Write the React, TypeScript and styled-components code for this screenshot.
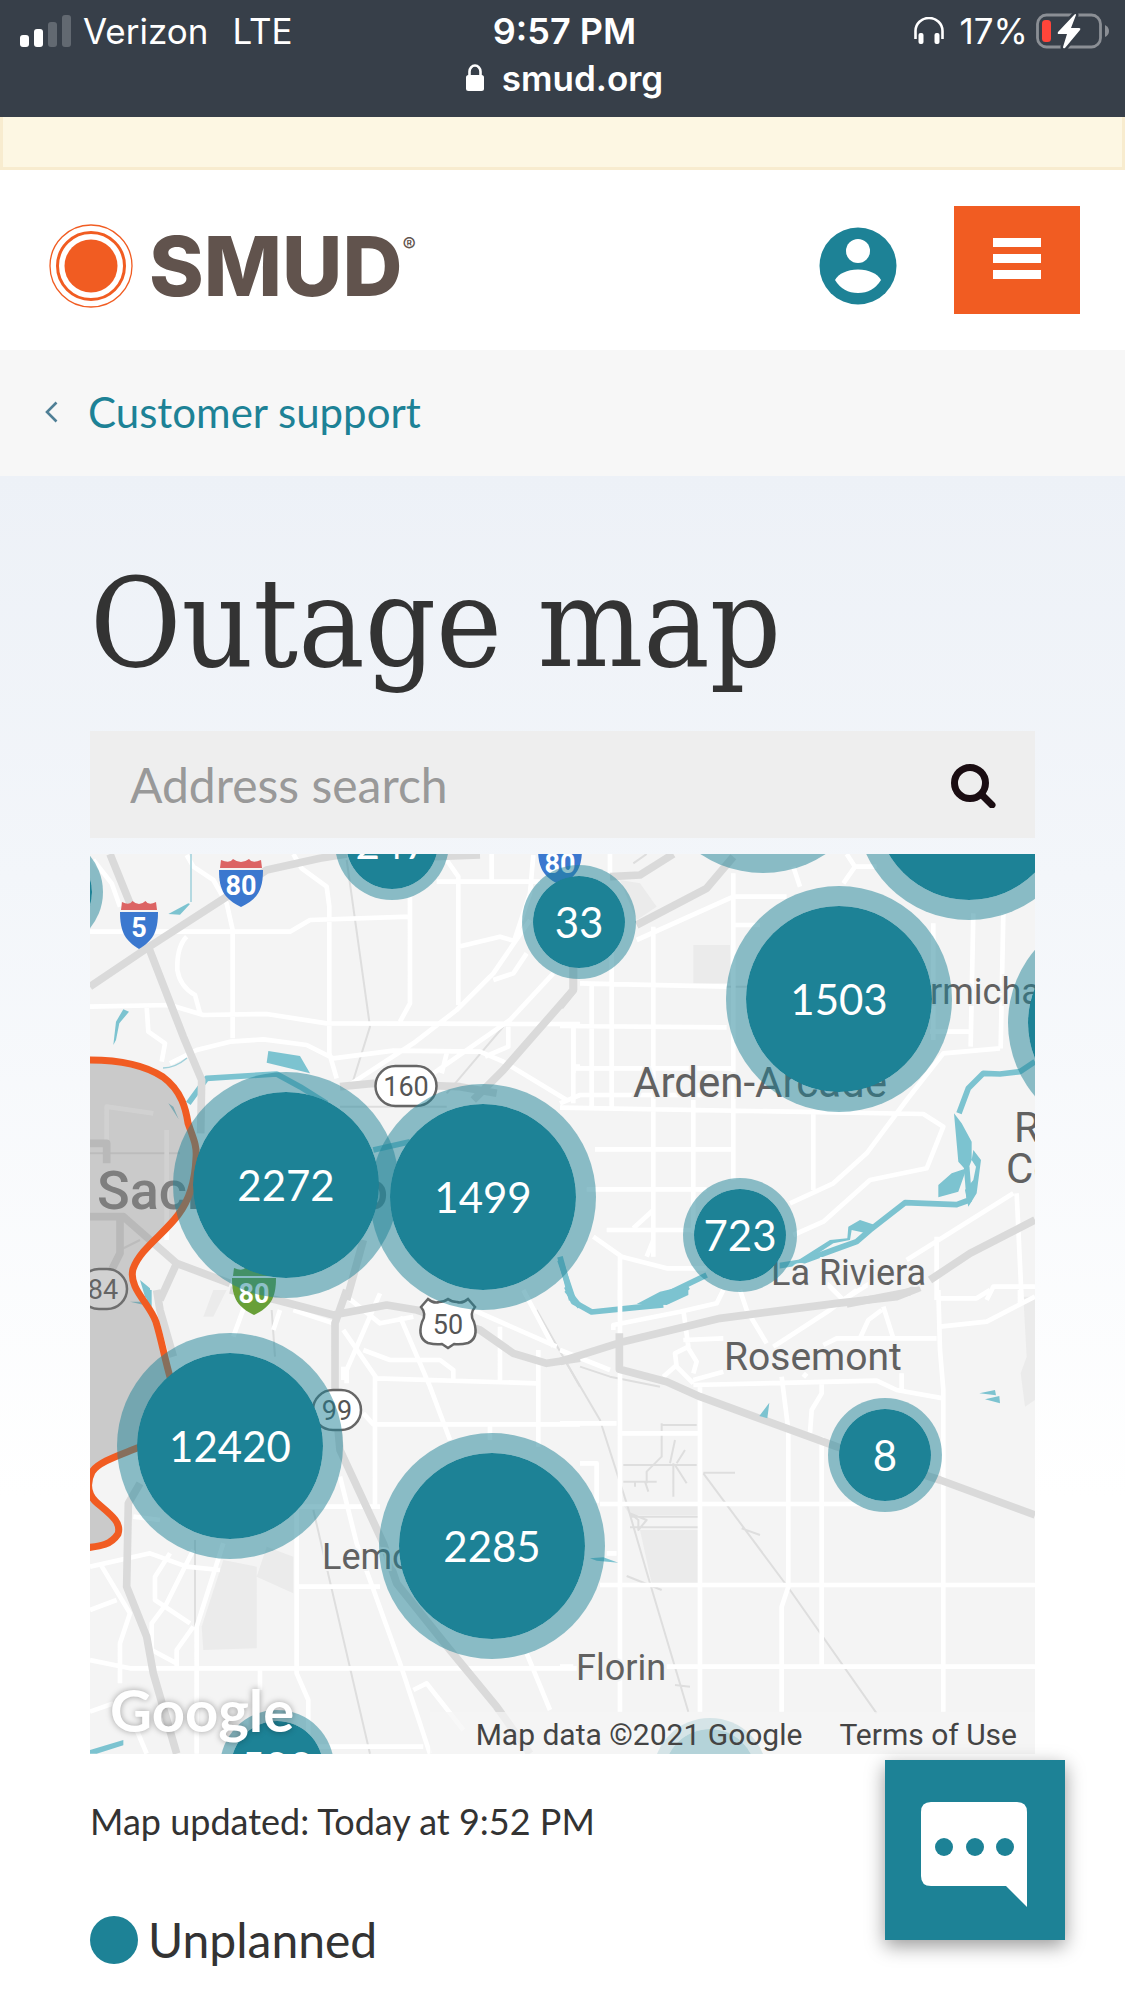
import React from "react";
import styled, { createGlobalStyle } from "styled-components";

const color = {
  teal: "#1d8296",
  orange: "#f15c22",
  brown: "#61534d",
  text: "#333333",
  bar: "#373f49",
};

const GlobalStyle = createGlobalStyle`
  *, *::before, *::after { box-sizing: border-box; }
  body {
    margin: 0;
    background: #ffffff;
    color: ${color.text};
    font-family: Lato, "Open Sans", sans-serif;
  }
`;

/* ---------- browser status bar ---------- */

const StatusBar = styled.div`
  padding-bottom: 23px;
  background: ${color.bar};
  color: #ffffff;
  font-family: Inter, "Liberation Sans", sans-serif;
  font-size: 35px;
  line-height: 32px;
`;

const StatusRow = styled.div`
  display: grid;
  grid-template-columns: 1fr auto 1fr;
  align-items: center;
  height: 62px;
  padding: 0 16px 0 20px;
`;

const StatusGroup = styled.div<{ $end?: boolean }>`
  display: flex;
  align-items: center;
  justify-content: ${(p) => (p.$end ? "flex-end" : "flex-start")};
  gap: ${(p) => (p.$end ? "8px" : "12px")};
`;

const Network = styled.span`
  margin-left: 12px;
`;

const Percent = styled.span`
  margin-left: 8px;
`;

const Clock = styled.time`
  font-size: 36px;
  font-weight: 600;
`;

const AddressRow = styled.div`
  display: flex;
  align-items: center;
  justify-content: center;
  gap: 18px;
  padding-left: 4px;
  font-weight: 600;
`;

/* ---------- site header ---------- */

const Notice = styled.div`
  height: 53px;
  border: 3px solid #f8eccf;
  border-top: 0;
  background: #fdf7e3;
`;

const Header = styled.header`
  display: flex;
  align-items: center;
  padding: 36px 45px 24px 49px;
  background: #ffffff;
`;

const LogoLink = styled.a`
  display: flex;
  align-items: center;
  gap: 16px;
  height: 120px;
  margin-right: auto;
  color: ${color.brown};
  text-decoration: none;
`;

const Wordmark = styled.span`
  display: flex;
  align-items: flex-start;
  font-family: Inter, "Liberation Sans", sans-serif;
  font-size: 83px;
  font-weight: 800;
  line-height: 80px;
`;

const Registered = styled.span`
  font-size: 20px;
  font-weight: 400;
  line-height: 38px;
`;

const IconButton = styled.button`
  display: flex;
  padding: 0;
  border: 0;
  background: transparent;
`;

const MenuButton = styled.button`
  display: flex;
  flex-direction: column;
  align-items: center;
  align-self: flex-start;
  gap: 7px;
  width: 126px;
  height: 108px;
  margin-left: 57px;
  padding: 32px 0 0;
  border: 0;
  background: ${color.orange};
`;

const MenuBar = styled.span`
  width: 48px;
  height: 9px;
  background: #ffffff;
`;

const Breadcrumb = styled.nav`
  display: flex;
  align-items: center;
  height: 126px;
  padding: 0 45px 2px;
  background: #f7f7f7;
`;

const BreadcrumbLink = styled.a`
  display: flex;
  align-items: center;
  gap: 30px;
  color: ${color.teal};
  font-size: 42px;
  line-height: 54px;
  text-decoration: none;
`;

/* ---------- page ---------- */

const Main = styled.main`
  padding: 87px 90px 36px;
  background: linear-gradient(#edf1f7 0, #f3f6fa 400px, #ffffff 1020px);
`;

const Title = styled.h1`
  margin: 0 0 48px;
  font-family: "DejaVu Serif Condensed", "DejaVu Serif", serif;
  font-size: 124px;
  font-weight: 400;
  line-height: 120px;
`;

const SearchForm = styled.form`
  display: flex;
  align-items: center;
  height: 107px;
  margin-bottom: 16px;
  padding: 0 38px 0 40px;
  background: #eeeeee;
`;

const SearchInput = styled.input`
  flex: 1;
  min-width: 0;
  padding: 0;
  border: 0;
  outline: 0;
  background: transparent;
  color: ${color.text};
  font-family: inherit;
  font-size: 48px;
  line-height: 60px;

  &::placeholder {
    color: #999999;
    opacity: 1;
  }
`;

const MapFrame = styled.section`
  position: relative;
  height: 900px;
  overflow: hidden;
  background: #f4f4f4;
`;

const MapCanvas = styled.svg`
  display: block;
  width: 100%;
  height: 100%;
`;

const Cluster = styled.button<{ $x: number; $y: number; $large?: boolean }>`
  position: absolute;
  left: ${(p) => (p.$x / 945) * 100}%;
  top: ${(p) => p.$y}px;
  width: ${(p) => (p.$large ? 226 : 114)}px;
  height: ${(p) => (p.$large ? 226 : 114)}px;
  padding: 0;
  border: ${(p) => (p.$large ? 20 : 11)}px solid rgba(29, 130, 150, 0.5);
  border-radius: 50%;
  background: ${color.teal};
  background-clip: padding-box;
  color: #ffffff;
  font-family: inherit;
  font-size: 42px;
  line-height: 42px;
  white-space: nowrap;
  transform: translate(-50%, -50%);
`;

const GoogleLogo = styled.a`
  position: absolute;
  left: 20px;
  bottom: 4px;
  color: #ffffff;
  font-size: 58px;
  font-weight: 700;
  line-height: 80px;
  text-decoration: none;
  text-shadow: 0 0 6px rgba(0, 0, 0, 0.35);
`;

const Attribution = styled.div`
  position: absolute;
  right: 0;
  bottom: 0;
  display: flex;
  gap: 37px;
  height: 42px;
  padding: 0 18px 0 46px;
  background: rgba(245, 245, 245, 0.7);
  color: #444444;
  font-family: Roboto, sans-serif;
  font-size: 30px;
  line-height: 46px;
`;

const TermsLink = styled.a`
  color: inherit;
  text-decoration: none;
`;

const Updated = styled.p`
  margin: 40px 0 68px;
  font-size: 36px;
  line-height: 54px;
`;

const Legend = styled.div`
  display: flex;
  align-items: center;
  gap: 10px;
  font-size: 48px;
  line-height: 48px;
`;

const Dot = styled.span`
  width: 48px;
  height: 48px;
  border-radius: 50%;
  background: ${color.teal};
`;

const ChatButton = styled.button`
  position: fixed;
  right: 60px;
  bottom: 61px;
  width: 180px;
  height: 180px;
  padding: 0;
  border: 0;
  background: ${color.teal};
  box-shadow: 0 6px 18px rgba(0, 0, 0, 0.4);
`;

/* ---------- map data ---------- */

type Tile = {
  at: string;
  areas: string;
  roads: string;
  thin: string;
  highways: string;
  water: string;
  rivers: string;
};

// Each tile is drawn at three times the map's scale from its own origin.
const tiles: Tile[] = [
  {
    at: "translate(-10 -14) scale(0.33333)",
    areas: "",
    roads:
      "M30 275H630L690 240L990 230M40 60L95 130L120 200M320 45L340 80L400 120L440 190L458 270V595M320 290Q290 320 292 390Q300 440 345 465L360 520M640 42L665 85L740 140L748 200V640L770 715M30 500L270 495L370 525L560 522L740 550L1500 552M200 500L205 575L255 610L245 665M270 670L350 630L450 605L550 598L680 615L760 655L940 632L1200 635L1270 665L1460 780M990 170V490L960 545M1070 125H1380M1100 60L1135 110V495M1135 320L1260 290L1310 305M1235 42V120M1350 240L1240 400L1130 510L1000 610L800 740M1360 45L1350 160L1300 310M1340 340L1300 400L1240 420M1420 400L1290 540L1060 700M1285 560V620L1215 650M1480 560V680H1500M1480 680V790M1100 640L1085 700M80 940V800L220 820M260 1200V870",
    thin: "M800 60L870 560L820 720M1270 560L1100 760M30 940H300M780 800H1100M120 1230L180 1200",
    highways:
      "M30 440L200 325L440 170L560 90L720 55L800 42M90 42L150 190M205 320L310 590L365 720L362 880M1480 380V450L1270 690L1180 780M780 740L880 730L1140 740L1250 760M30 1130H130L290 1270L450 1330M290 1270L240 1380M850 1200L800 1380M1060 50L1200 45M120 1130V1240L90 1300M30 910H80V970",
    water:
      "M565 633L660 648L690 700L560 668ZM325 190L265 222L300 224L330 192ZM100 615L108 545L130 508L147 515L118 550L108 600ZM265 790L280 800L296 838ZM180 1320L210 1345L213 1390L195 1370Z",
    rivers: "M325 790L380 715L590 702L660 740L740 790M880 930L990 905M1440 1250L1475 1380",
  },
  {
    at: "translate(470 -14) scale(0.33333)",
    areas: "M400 315H510V430H400ZM180 120L240 130L290 200L230 240Z",
    roads:
      "M150 42V100M520 100V1020M95 430V800M155 260V800M280 260V1250M60 430L500 440M0 558L500 562M40 560V700M40 685H520M0 790L60 765H500M0 803L1090 822L1150 860L1100 985L930 1020L790 1145L700 1185M400 780V1180M760 820V1050M105 928H520M80 1048H440M140 1170H400M100 1190L185 1250L320 1285H440M180 1250V1380M280 1110L220 1165M280 1200L260 1250M1320 625L1150 640L1040 780L920 940L820 1030L690 1090M230 300L520 170H680M520 255H600M700 80L720 140M860 42L885 80L850 130M885 80H950M1240 220L1232 620M1330 220L1322 625M1120 250V600M1110 575H1240M1360 1060L1040 1260M1370 1060L1385 1380M1130 1190V1380M1425 1340H1300L1280 1380M800 1330L850 1380L930 1330",
    thin: "M220 70L260 42M640 440H500",
    highways:
      "M150 110L240 105L340 42M520 50L440 145L230 255M40 380V450L0 500M1425 1140L1230 1240L1110 1320M860 1392L1050 1355",
    water:
      "M1182 820L1205 850L1235 905V960L1222 995L1195 965ZM1135 1035L1175 1000L1220 985L1195 1055L1135 1072ZM1240 930L1263 960L1250 1060L1225 1100L1215 1050L1240 1020L1248 980L1235 960ZM865 1160L900 1140L945 1155L920 1180L875 1170L870 1200L820 1210L740 1262L700 1270L810 1200L862 1195Z",
    rivers:
      "M1425 665L1380 695L1320 702L1270 700L1225 745L1197 820M1220 980L1228 1080L1190 1094L1035 1088L930 1170L890 1205L820 1230L720 1267L640 1280M440 1305L260 1392M385 1340L320 1385M0 1260L40 1380",
  },
  {
    at: "translate(-10 436) scale(0.33333)",
    areas: "M430 810L530 830V1075L370 1080L365 1010ZM530 860L640 910V800L560 770ZM400 0H440L400 80H370Z",
    roads:
      "M500 30L460 140M640 60L760 100M580 120L600 60M790 120L890 265L1370 280M885 260V650M790 230V270M900 10L800 240V280M850 180L930 210H1080L1120 240V275M960 80L1050 290L1110 450M1260 110V280M1180 60L1430 170M1330 0L1420 170M1375 180V470M850 370L880 403H1500M1230 410V450M640 650H900M780 560L830 760L960 1120L1050 1391M650 650V1150L685 1230V1391M650 890H900M30 1110L150 1135H1500M60 820L150 970L120 1060V1180M30 830L210 790L320 830L420 840M270 790L225 860V930L330 1000M340 780L260 940L215 1000V1080L290 1120M430 760L350 1010V1391M340 1010L290 1080V1130M30 960L110 930M540 1140V1200M1000 1200L1040 1180L1150 1320M1340 1090L1410 1260M700 1370H1030M30 1265L100 1240M170 1320L200 1391M160 680L240 690M800 20L900 100L1000 80",
    thin: "M575 60L585 200M700 660L870 1391M345 750V1010M1370 60L1500 290",
    highways:
      "M450 0L590 30L760 75L920 45L1010 60L1200 120L1300 190L1400 220L1500 205M800 0L765 100V320L780 480L910 760L950 880L1110 1080L1250 1250L1350 1391M230 0L240 60L280 200M180 580L145 640L140 890L200 1040L220 1150L290 1391",
    water: "M30 1380L130 1350V1366L50 1391H30ZM150 35L215 50V0H200V35Z",
    rivers: "M1460 0L1500 50",
  },
  {
    at: "translate(470 436) scale(0.33333)",
    areas:
      "M240 720H415V880H275ZM190 645H415V675H210ZM1390 20H1425V330L1395 350L1382 250L1400 200Z",
    roads:
      "M180 0V1265M420 280V1265M665 260L685 420V890L665 950V1265M785 280V310L755 360L750 430M785 440V1130M1135 0L1140 180L1150 300V1265M0 400H170M180 430H415M60 520H110V640M120 642H900M120 885H1425M0 1130H40M320 1130H1425M400 285L950 272L1010 300L1150 325M790 165L830 145H1130M970 50L1000 145M900 145L925 90L965 60M540 0L560 60L620 160M160 120V105L360 65L470 40L490 0M370 60L385 170L345 190L350 230L400 280M385 175L410 215L400 250M370 150L490 145M640 170L810 60L890 0M310 260L350 225M400 270L490 245M1140 25H1250L1290 0M1140 110L1280 95L1425 20M1380 0V40M1025 250V300M140 790H170M0 180L150 240M730 262L740 250",
    thin: "M20 220L120 390L200 640L270 880L385 1265M430 550L690 900L950 1270M430 548H525M305 400V500L260 545V580M305 405H410M190 525H410M190 575H290M340 520V620M330 520L345 450M345 525L380 580M350 520L375 480M210 680H415M210 712H415M545 715L600 735M200 858L305 900M60 230L150 260L300 290M225 575V590M255 575L265 605M345 1185L390 1190M210 670L260 690L235 720V690Z",
    highways:
      "M0 215L190 155L480 85L830 40L1010 20L1080 -8M178 130V238L320 275L420 320L830 470L1140 570L1425 675",
    water:
      "M598 378L628 338L622 385ZM1258 310L1305 300L1308 316ZM1275 328L1318 318L1320 340ZM90 805L130 802L175 818L110 812ZM230 42L300 5L385 -15V15L320 45Z",
    rivers: "M20 -10L40 35L95 66L230 52L310 45",
  },
];

const clusters = [
  { count: "247", x: 302, y: -11 },
  { count: "", x: 673, y: -94, large: true },
  { count: "", x: 879, y: -47, large: true },
  { count: "", x: 1031, y: 169, large: true },
  { count: "", x: -44, y: 38 },
  { count: "33", x: 489, y: 68 },
  { count: "1503", x: 749, y: 145, large: true },
  { count: "2272", x: 196, y: 331, large: true },
  { count: "1499", x: 393, y: 343, large: true },
  { count: "723", x: 650, y: 381 },
  { count: "12420", x: 140, y: 592, large: true },
  { count: "2285", x: 402, y: 692, large: true },
  { count: "8", x: 795, y: 601 },
  { count: "588", x: 187, y: 913 },
  { count: "", x: 620, y: 921 },
];

const places = [
  { name: "Arden-Arcade", x: 543, y: 243, size: 42 },
  { name: "Carmichael", x: 797, y: 150, size: 36 },
  { name: "Rancho", x: 924, y: 288, size: 42 },
  { name: "Cordova", x: 916, y: 329, size: 42 },
  { name: "La Riviera", x: 681, y: 431, size: 36 },
  { name: "Rosemont", x: 634, y: 516, size: 39 },
  { name: "Florin", x: 486, y: 826, size: 36 },
  { name: "Lemon Hill", x: 232, y: 715, size: 36 },
];

const island =
  "M-12 206H0C22 206 50 208 73 223C92 237 96 256 98 269C104 286 107 292 106 304C105 330 98 348 88 361C74 380 50 395 43 415C38 434 60 450 66 468C72 488 74 502 80 523C90 560 75 585 47 594C30 601 8 608 2 618C-4 630 -2 640 6 648C20 660 32 668 28 680C20 692 10 692 -12 695Z";

/* ---------- drawings ---------- */

function Interstate({ x, y, label, green }: { x: number; y: number; label: string; green?: boolean }) {
  const half = label.length > 1 ? 22 : 19;
  return (
    <g transform={`translate(${x} ${y})`}>
      <path
        d={`M${-half} 11C${-half} 32 ${-half + 6} 40 0 48C${half - 6} 40 ${half} 32 ${half} 11Z`}
        fill={green ? "#689f38" : "#3b78cf"}
      />
      <path
        d={`M${-half + 1} 9L${-half + 2} 1Q${-half / 2} 5 ${-half / 2 + 3} 0Q0 6 ${half / 2 - 3} 0Q${half / 2} 5 ${half - 2} 1L${half - 1} 9Z`}
        fill={green ? "#689f38" : "#dc6464"}
      />
      <text x="0" y="36" textAnchor="middle" fontSize="27" fontWeight="700" fill="#ffffff">
        {label}
      </text>
    </g>
  );
}

function RoutePill({ x, y, width, label }: { x: number; y: number; width: number; label: string }) {
  return (
    <g transform={`translate(${x} ${y})`}>
      <rect x={-width / 2} y="-20" width={width} height="40" rx="20" fill="#ffffff" stroke="#666666" strokeWidth="2.5" />
      <text x="0" y="10" textAnchor="middle" fontSize="27" fill="#555555">
        {label}
      </text>
    </g>
  );
}

function MapDrawing() {
  return (
    <MapCanvas viewBox="0 0 945 900" preserveAspectRatio="xMidYMid slice" fontFamily="Roboto, sans-serif">
      {tiles.map((t) => (
        <path key={t.at} transform={t.at} d={t.areas} fill="#ebebeb" />
      ))}
      <g fill="none" strokeLinejoin="round">
        {tiles.map((t) => (
          <path key={t.at} transform={t.at} d={t.thin} stroke="#dedede" strokeWidth="6" />
        ))}
        {tiles.map((t) => (
          <path key={t.at} transform={t.at} d={t.rivers} stroke="#7cc3d0" strokeWidth="17" />
        ))}
        {tiles.map((t) => (
          <path key={t.at} transform={t.at} d={t.roads} stroke="#ffffff" strokeWidth="14" />
        ))}
        {tiles.map((t) => (
          <path key={t.at} transform={t.at} d={t.highways} stroke="#dadada" strokeWidth="23" />
        ))}
      </g>
      {tiles.map((t) => (
        <path key={t.at} transform={t.at} d={t.water} fill="#7cc3d0" />
      ))}
      <path d="M101 0V48M73 214Q85 214 97 204" fill="none" stroke="#9fd0da" strokeWidth="1.5" />

      <text x="7" y="355" fontSize="54" fontWeight="500" fill="#7d7d7d">
        Sacramento
      </text>
      {places.map((p) => (
        <text key={p.name} x={p.x} y={p.y} fontSize={p.size} fill="#616161" stroke="#f4f4f4" strokeWidth="4" paintOrder="stroke">
          {p.name}
        </text>
      ))}

      <Interstate x={151} y={5} label="80" />
      <Interstate x={49} y={47} label="5" />
      <Interstate x={470} y={-17} label="80" />
      <Interstate x={164} y={413} label="80" green />
      <RoutePill x={316} y={232} width={61} label="160" />
      <RoutePill x={13} y={435} width={48} label="84" />
      <RoutePill x={247} y={556} width={48} label="99" />
      <g transform="translate(358 444)">
        <path
          d="M-20 1Q-14 6 -9 4Q-4 4 0 1Q4 4 9 4Q14 6 20 1L27 9Q21 16 26 24Q31 40 20 45Q12 47 6 46L0 50L-6 46Q-12 47 -20 45Q-31 40 -26 24Q-21 16 -27 9Z"
          fill="#ffffff"
          stroke="#666666"
          strokeWidth="2.5"
        />
        <text x="0" y="36" textAnchor="middle" fontSize="27" fill="#555555">
          50
        </text>
      </g>

      <path d={island} fill="#808080" fillOpacity="0.36" stroke={color.orange} strokeWidth="7" />
    </MapCanvas>
  );
}

function SignalIcon() {
  return (
    <svg width="51" height="32" viewBox="0 0 51 32" fill="#ffffff" aria-hidden="true">
      <rect x="0" y="20" width="9" height="12" rx="3" />
      <rect x="14" y="14" width="9" height="18" rx="3" />
      <rect x="28" y="7" width="9" height="25" rx="3" opacity="0.22" />
      <rect x="42" y="0" width="9" height="32" rx="3" opacity="0.22" />
    </svg>
  );
}

function HeadphonesIcon() {
  return (
    <svg width="30" height="28" viewBox="0 0 30 28" aria-hidden="true">
      <path d="M1.5 22V14A13.5 13 0 0 1 28.5 14V22" fill="none" stroke="#ffffff" strokeWidth="2.6" />
      <rect x="4.5" y="16" width="5" height="11" rx="2" fill="#ffffff" />
      <rect x="20.5" y="16" width="5" height="11" rx="2" fill="#ffffff" />
    </svg>
  );
}

function BatteryIcon() {
  return (
    <svg width="73" height="36" viewBox="0 0 73 36" aria-hidden="true">
      <rect x="1.5" y="2" width="63" height="32" rx="9" fill="none" stroke="#8b8f95" strokeWidth="2.8" />
      <path d="M69 12Q73 14 73 18Q73 22 69 24Z" fill="#8b8f95" />
      <rect x="6" y="7" width="9" height="22" rx="3.5" fill="#ff453a" />
      <path
        d="M38 2L22 19Q21 21 23 21H31L27 34Q27 36 29 35L44 17Q45 15 43 15H35L40 2Q40 0 38 2Z"
        fill="#ffffff"
        stroke={color.bar}
        strokeWidth="5"
        paintOrder="stroke"
      />
    </svg>
  );
}

function LockIcon() {
  return (
    <svg width="18" height="28" viewBox="0 0 18 28" aria-hidden="true">
      <rect x="0" y="11" width="18" height="16" rx="2.5" fill="#ffffff" />
      <path d="M3.5 13V7.5A5.5 6 0 0 1 14.5 7.5V13" fill="none" stroke="#ffffff" strokeWidth="2.6" />
    </svg>
  );
}

function SunMark() {
  return (
    <svg width="84" height="84" viewBox="0 0 84 84" fill="none" stroke={color.orange} aria-hidden="true">
      <circle cx="42" cy="42" r="41" strokeWidth="1.3" />
      <circle cx="42" cy="42" r="33.5" strokeWidth="3" />
      <circle cx="42" cy="42" r="26.5" fill={color.orange} stroke="none" />
    </svg>
  );
}

function AccountIcon() {
  return (
    <svg width="78" height="78" viewBox="0 0 78 78" aria-hidden="true">
      <circle cx="39" cy="39" r="38.5" fill={color.teal} />
      <circle cx="39" cy="24" r="12" fill="#ffffff" />
      <path d="M16 53Q22 43 39 42.5Q56 43 62 53Q54 66 39 66Q24 66 16 53Z" fill="#ffffff" />
    </svg>
  );
}

function SearchIcon() {
  return (
    <svg width="46" height="46" viewBox="0 0 46 46" fill="none" stroke="#1a0d12" aria-hidden="true">
      <circle cx="19" cy="21" r="15.5" strokeWidth="7" />
      <path d="M31 33L41 43" strokeWidth="7" strokeLinecap="round" />
    </svg>
  );
}

function ChatIcon() {
  return (
    <svg width="180" height="180" viewBox="0 0 180 180" aria-hidden="true">
      <path d="M46 42H132Q142 42 142 52V147L121 126H46Q36 126 36 116V52Q36 42 46 42Z" fill="#ffffff" />
      <g fill={color.teal}>
        <circle cx="59" cy="87" r="9" />
        <circle cx="90" cy="87" r="9" />
        <circle cx="120" cy="87" r="9" />
      </g>
    </svg>
  );
}

export default function App() {
  return (
    <>
      <GlobalStyle />
      <StatusBar>
        <StatusRow>
          <StatusGroup>
            <SignalIcon />
            <span>Verizon</span>
            <Network>LTE</Network>
          </StatusGroup>
          <Clock>9:57 PM</Clock>
          <StatusGroup $end>
            <HeadphonesIcon />
            <Percent>17%</Percent>
            <BatteryIcon />
          </StatusGroup>
        </StatusRow>
        <AddressRow>
          <LockIcon />
          <span>smud.org</span>
        </AddressRow>
      </StatusBar>

      <Notice />

      <Header>
        <LogoLink href="#home">
          <SunMark />
          <Wordmark>
            SMUD
            <Registered>®</Registered>
          </Wordmark>
        </LogoLink>
        <IconButton type="button" aria-label="Account">
          <AccountIcon />
        </IconButton>
        <MenuButton type="button" aria-label="Menu">
          <MenuBar />
          <MenuBar />
          <MenuBar />
        </MenuButton>
      </Header>

      <Breadcrumb aria-label="Breadcrumb">
        <BreadcrumbLink href="#support">
          <svg width="13" height="22" viewBox="0 0 13 22" aria-hidden="true">
            <path d="M11.5 1.5L2 11L11.5 20.5" fill="none" stroke="#4f7f96" strokeWidth="2.6" />
          </svg>
          Customer support
        </BreadcrumbLink>
      </Breadcrumb>

      <Main>
        <Title>Outage map</Title>
        <SearchForm role="search" onSubmit={(e) => e.preventDefault()}>
          <SearchInput type="text" aria-label="Address search" placeholder="Address search" />
          <IconButton type="submit" aria-label="Search">
            <SearchIcon />
          </IconButton>
        </SearchForm>

        <MapFrame aria-label="Outage map">
          <MapDrawing />
          {clusters.map((c) => (
            <Cluster key={`${c.x},${c.y}`} type="button" $x={c.x} $y={c.y} $large={c.large} aria-label={`${c.count} outages`}>
              {c.count}
            </Cluster>
          ))}
          <GoogleLogo href="#google">Google</GoogleLogo>
          <Attribution>
            <span>Map data ©2021 Google</span>
            <TermsLink href="#terms">Terms of Use</TermsLink>
          </Attribution>
        </MapFrame>

        <Updated>Map updated: Today at 9:52 PM</Updated>
        <Legend>
          <Dot />
          Unplanned
        </Legend>
      </Main>

      <ChatButton type="button" aria-label="Open chat">
        <ChatIcon />
      </ChatButton>
    </>
  );
}
